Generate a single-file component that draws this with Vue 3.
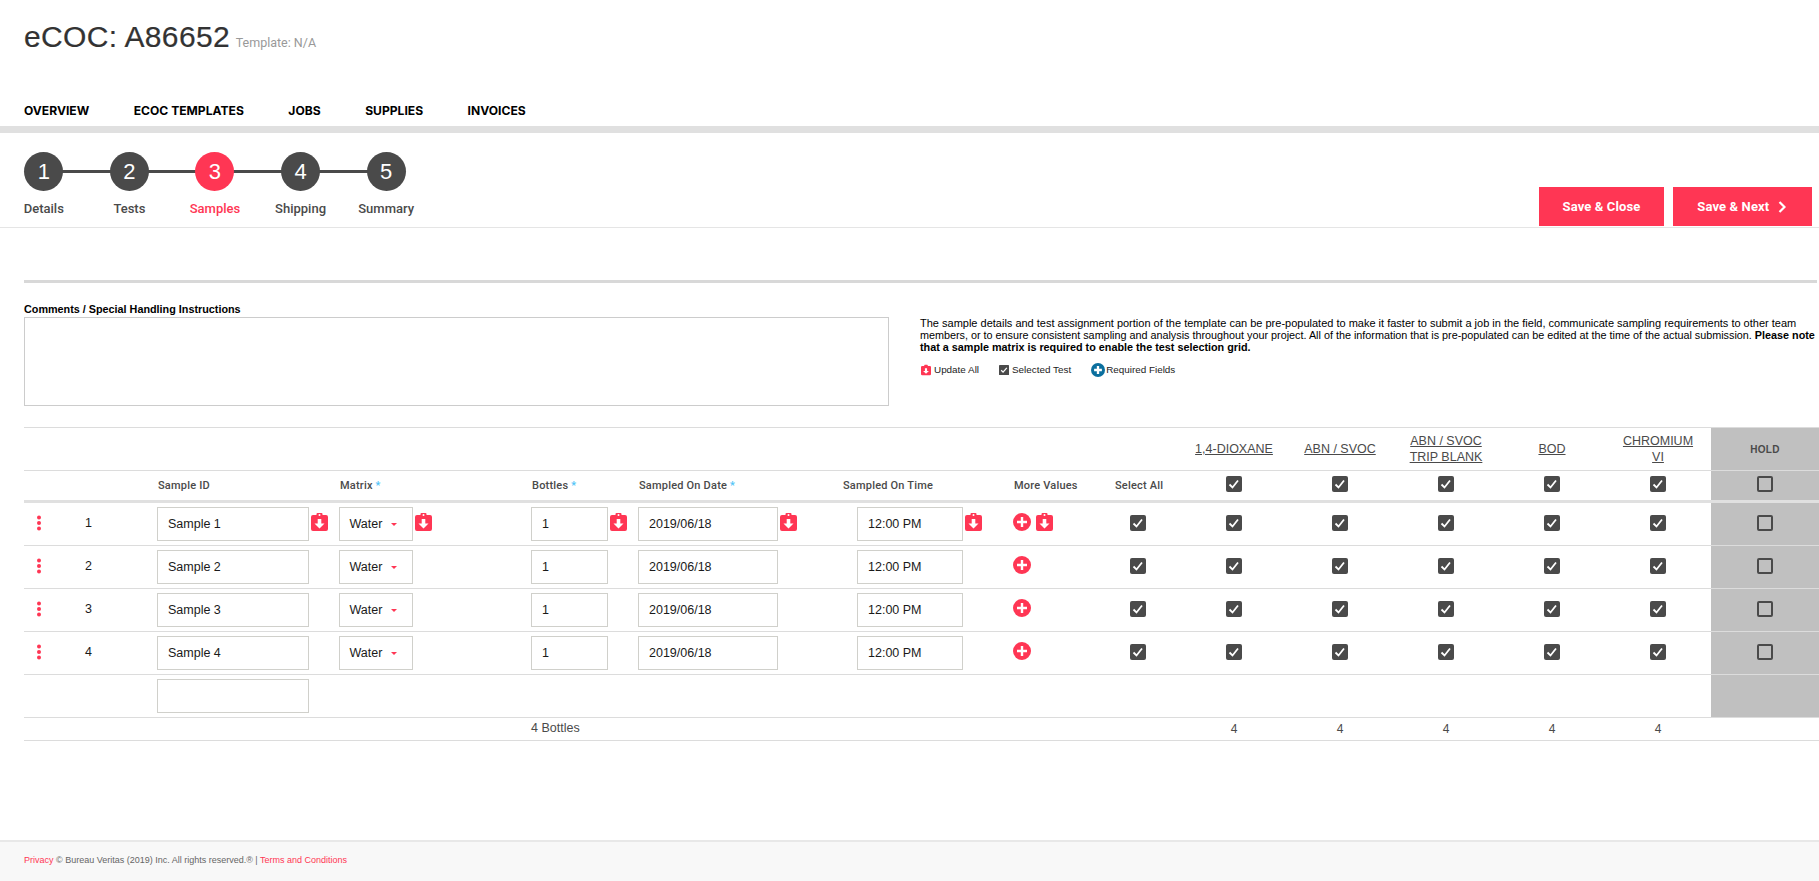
<script setup>
const nav = ['OVERVIEW', 'ECOC TEMPLATES', 'JOBS', 'SUPPLIES', 'INVOICES']
const steps = ['Details', 'Tests', 'Samples', 'Shipping', 'Summary']
const tests = [['1,4-DIOXANE'], ['ABN / SVOC'], ['ABN / SVOC', 'TRIP BLANK'], ['BOD'], ['CHROMIUM', 'VI']]
const rows = [1, 2, 3, 4]
const clipBody = 'M2 2h3.500V1a1 1 0 0 1 1-1h4a1 1 0 0 1 1 1v1H15a2 2 0 0 1 2 2v12a2 2 0 0 1-2 2H2a2 2 0 0 1-2-2V4a2 2 0 0 1 2-2z'
const clipArrow = 'M6.700 6h3.600v4.500h3.200l-5 5-5-5h3.200z'
</script>

<template>
  <div class="page">
    <header class="top">
      <h1 class="title">eCOC: A86652 <small>Template: N/A</small></h1>
      <nav class="nav"><a v-for="n in nav" :key="n">{{ n }}</a></nav>
    </header>
    <div class="graybar"></div>

    <section class="wizard">
      <ol class="steps">
        <li v-for="(s, i) in steps" :key="s" class="step" :class="{ active: i === 2 }">
          <span class="circle">{{ i + 1 }}</span>
          <span class="lbl">{{ s }}</span>
        </li>
      </ol>
      <div class="actions">
        <button class="btn close">Save &amp; Close</button>
        <button class="btn next">Save &amp; Next
          <svg width="8" height="12" viewBox="0 0 8 12"><path d="M1.500 1l5 5-5 5" fill="none" stroke="#fff" stroke-width="2.200"/></svg>
        </button>
      </div>
    </section>

    <div class="rule"></div>

    <section class="info">
      <div class="comments">
        <label>Comments / Special Handling Instructions</label>
        <textarea></textarea>
      </div>
      <div class="help">
        <p><span class="first">The sample details and test assignment portion of the template can be pre-populated to make it faster to submit a job in the field, communicate sampling requirements to other team</span><br>members, or to ensure consistent sampling and analysis throughout your project. All of the information that is pre-populated can be edited at the time of the actual submission. <b>Please note<br>that a sample matrix is required to enable the test selection grid.</b></p>
        <div class="legend">
          <span class="lg l1">
            <svg width="10" height="12" viewBox="0 0 17 18"><path :d="clipBody" fill="#ff3654"/><path :d="clipArrow" fill="#fff"/></svg>
            Update All</span>
          <span class="lg l2">
            <svg width="10" height="10" viewBox="0 0 16 16"><rect width="16" height="16" rx="1" fill="#4a4a4a"/><path d="M3.500 8.500l3 3 6-7" fill="none" stroke="#fff" stroke-width="2"/></svg>
            Selected Test</span>
          <span class="lg l3">
            <svg width="14" height="14" viewBox="0 0 18 18"><circle cx="9" cy="9" r="9" fill="#0b6f9e"/><path d="M9 4v10M4 9h10" stroke="#fff" stroke-width="3"/></svg>
            Required Fields</span>
        </div>
      </div>
    </section>

    <section class="grid">
      <div class="gr head1">
        <div class="span9"></div>
        <div v-for="(t, i) in tests" :key="i" class="tname">
          <a v-for="l in t" :key="l">{{ l }}</a>
        </div>
        <div class="hold holdtitle">HOLD</div>
      </div>
      <div class="gr head2">
        <div></div><div></div>
        <div class="th">Sample ID</div>
        <div class="th">Matrix <i>*</i></div>
        <div class="th">Bottles <i>*</i></div>
        <div class="th">Sampled On Date <i>*</i></div>
        <div class="th">Sampled On Time</div>
        <div class="th">More Values</div>
        <div class="th">Select All</div>
        <div v-for="t in 5" :key="t" class="c"><span class="chk on"><svg width="16" height="16" viewBox="0 0 16 16"><path d="M3.500 8.500l3 3 5.500-7" fill="none" stroke="#fff" stroke-width="1.800"/></svg></span></div>
        <div class="c hold"><span class="chk"></span></div>
      </div>
      <div v-for="r in rows" :key="r" class="gr row">
        <div class="dots"><svg width="6" height="16" viewBox="0 0 6 16"><circle cx="3" cy="2.500" r="2" fill="#ff3654"/><circle cx="3" cy="8" r="2" fill="#ff3654"/><circle cx="3" cy="13.500" r="2" fill="#ff3654"/></svg></div>
        <div class="num">{{ r }}</div>
        <div class="cell"><input class="inp w-id" :value="'Sample ' + r" readonly>
          <svg v-if="r === 1" class="clip" width="17" height="18" viewBox="0 0 17 18"><path :d="clipBody" fill="#ff3654"/><circle cx="8.500" cy="2" r="1" fill="#fff"/><path :d="clipArrow" fill="#fff"/></svg>
        </div>
        <div class="cell"><div class="sel">Water<span class="caret"></span></div>
          <svg v-if="r === 1" class="clip" width="17" height="18" viewBox="0 0 17 18"><path :d="clipBody" fill="#ff3654"/><circle cx="8.500" cy="2" r="1" fill="#fff"/><path :d="clipArrow" fill="#fff"/></svg>
        </div>
        <div class="cell"><input class="inp w-bot" value="1" readonly>
          <svg v-if="r === 1" class="clip" width="17" height="18" viewBox="0 0 17 18"><path :d="clipBody" fill="#ff3654"/><circle cx="8.500" cy="2" r="1" fill="#fff"/><path :d="clipArrow" fill="#fff"/></svg>
        </div>
        <div class="cell"><input class="inp w-date" value="2019/06/18" readonly>
          <svg v-if="r === 1" class="clip" width="17" height="18" viewBox="0 0 17 18"><path :d="clipBody" fill="#ff3654"/><circle cx="8.500" cy="2" r="1" fill="#fff"/><path :d="clipArrow" fill="#fff"/></svg>
        </div>
        <div class="cell timec"><input class="inp w-time" value="12:00 PM" readonly>
          <svg v-if="r === 1" class="clip" width="17" height="18" viewBox="0 0 17 18"><path :d="clipBody" fill="#ff3654"/><circle cx="8.500" cy="2" r="1" fill="#fff"/><path :d="clipArrow" fill="#fff"/></svg>
        </div>
        <div class="cell more">
          <svg width="18" height="18" viewBox="0 0 18 18"><circle cx="9" cy="9" r="9" fill="#ff3654"/><path d="M9 4v10M4 9h10" stroke="#fff" stroke-width="2.400"/></svg>
          <svg v-if="r === 1" width="17" height="18" viewBox="0 0 17 18"><path :d="clipBody" fill="#ff3654"/><circle cx="8.500" cy="2" r="1" fill="#fff"/><path :d="clipArrow" fill="#fff"/></svg>
        </div>
        <div class="cell selall"><span class="chk on"><svg width="16" height="16" viewBox="0 0 16 16"><path d="M3.500 8.500l3 3 5.500-7" fill="none" stroke="#fff" stroke-width="1.800"/></svg></span></div>
        <div v-for="t in 5" :key="t" class="c"><span class="chk on"><svg width="16" height="16" viewBox="0 0 16 16"><path d="M3.500 8.500l3 3 5.500-7" fill="none" stroke="#fff" stroke-width="1.800"/></svg></span></div>
        <div class="c hold"><span class="chk"></span></div>
      </div>
      <div class="gr row">
        <div></div><div></div>
        <div class="cell"><input class="inp w-id" readonly></div>
        <div class="span6"></div>
        <div class="c hold last"></div>
      </div>
      <div class="gr totals">
        <div></div><div></div><div></div><div></div>
        <div class="tot">4 Bottles</div>
        <div></div><div></div><div></div><div></div>
        <div v-for="t in 5" :key="t" class="c tot">4</div>
        <div></div>
      </div>
    </section>

    <footer class="foot">
      <a>Privacy</a> © Bureau Veritas (2019) Inc. All rights reserved.® | <a>Terms and Conditions</a>
    </footer>
  </div>
</template>

<style>
html, body { margin: 0; background: #fff; }
</style>

<style scoped>
.page { height: 881px; width: 1819px; overflow: hidden; font-family: "Liberation Sans", Arial, sans-serif; color: #4a4a4a; display: flex; flex-direction: column; }
.top { height: 126px; padding: 20px 0 0 24px; box-sizing: border-box; }
.title { margin: 0; height: 38px; font-size: 30px; font-weight: 400; line-height: 34px; color: #333; letter-spacing: .35px; -webkit-text-stroke: .2px #333; }
.title small { font-size: 12.500px; color: #999; font-family: Roboto, sans-serif; margin-left: -3px; letter-spacing: 0; -webkit-text-stroke: 0; }
.nav { display: flex; gap: 44.500px; margin-top: 45px; }
.nav a { font-family: Inter, sans-serif; font-weight: 700; font-size: 12.100px; line-height: 16px; color: #000; }
.graybar { height: 7px; background: #e0e0e0; }
.wizard { height: 95px; box-sizing: border-box; border-bottom: 1px solid #e5e5e5; display: flex; justify-content: space-between; align-items: flex-end; padding-bottom: 1px; }
.steps { list-style: none; margin: 0 0 0 1px; padding: 0; display: flex; align-self: flex-start; padding-top: 19px; }
.step { width: 85.600px; display: flex; flex-direction: column; align-items: center; position: relative; }
.step:not(:last-child)::after { content: ""; position: absolute; left: 50%; width: 100%; top: 18px; height: 3px; background: #4a4a4a; }
.circle { width: 39px; height: 39px; border-radius: 50%; background: #4a4a4a; color: #fff; font-size: 22px; line-height: 39px; text-align: center; position: relative; z-index: 1; }
.lbl { margin-top: 10px; font-family: Roboto, sans-serif; font-weight: 500; font-size: 13px; line-height: 16px; white-space: nowrap; color: #4a4a4a; }
.active .circle { background: #ff3654; }
.active .lbl { color: #ff3654; }
.actions { display: flex; gap: 9px; margin-right: 7px; }
.btn { height: 39px; border: 0; background: #ff3654; color: #fff; font-family: Roboto, sans-serif; font-weight: 700; font-size: 13px; letter-spacing: .12px; padding: 0; }
.close { width: 125px; }
.next { width: 139px; padding-right: 2px; }
.next svg { margin-left: 5px; vertical-align: -2px; }
.rule { height: 3px; background: #d8d8d8; margin: 52px 2px 0 24px; }
.info { height: 144px; display: flex; padding-left: 24px; }
.comments { width: 865px; padding-top: 21px; }
.comments label { display: block; font-size: 10.800px; font-weight: 700; color: #000; line-height: 13px; margin-top: -1px; padding-bottom: 1px; }
.comments textarea { display: block; width: 865px; height: 89px; box-sizing: border-box; border: 1px solid #ccc; margin: 0; resize: none; background: #fff; }
.help { margin-left: 31px; width: 899px; padding-top: 34px; font-size: 10.800px; color: #000; }
.help p { margin: 0; line-height: 12px; white-space: nowrap; }
.help .first { font-size: 11px; }
.help b { font-size: 10.800px; }
.legend { display: flex; font-size: 9.900px; color: #222; margin-top: 10px; line-height: 14px; align-items: center; }
.lg { display: inline-flex; align-items: center; gap: 3px; white-space: nowrap; }
.l1 { margin-left: 1px; }
.l2 { margin-left: 20px; }
.l3 { margin-left: 20px; gap: 1px; }
.grid { margin-left: 24px; }
.gr { display: grid; grid-template-columns: 30px 103px 182px 192px 107px 204px 171px 101px 67px repeat(5, 106px) 108px; border-bottom: 1px solid #dcdcdc; }
.head1 { height: 44px; border-top: 1px solid #dcdcdc; box-sizing: border-box; }
.span9 { grid-column: span 9; }
.span6 { grid-column: span 11; }
.tname { display: flex; flex-direction: column; align-items: center; justify-content: center; font-size: 12.500px; line-height: 16px; }
.tname a { text-decoration: underline; color: #4a4a4a; }
.hold { background: #c0c0c0; }
.holdtitle { font-size: 10px; font-weight: 700; display: flex; align-items: center; justify-content: center; letter-spacing: .3px; }
.head2 { height: 32px; box-sizing: border-box; border-bottom: 3px solid #e0e0e0; }
.th { font-family: Roboto, sans-serif; font-size: 11px; font-weight: 500; letter-spacing: .2px; line-height: 29px; color: #4a4a4a; padding-left: 1px; white-space: nowrap; }
.th i { font-style: normal; color: #4fc3f7; }
.c { display: flex; align-items: center; justify-content: center; padding-bottom: 3px; box-sizing: border-box; }
.chk { width: 16px; height: 16px; border-radius: 2px; box-sizing: border-box; border: 2px solid #4a4a4a; display: block; }
.chk.on { background: #4a4a4a; border: 0; }
.chk svg { display: block; }
.row { height: 43px; box-sizing: border-box; }
.dots { display: flex; align-items: center; justify-content: center; padding-bottom: 3px; }
.num { font-size: 12.500px; color: #1a1a1a; padding-left: 31px; line-height: 41px; }
.cell { display: flex; align-items: center; gap: 2px; }
.inp, .sel { height: 34px; box-sizing: border-box; border: 1px solid #d0d0cb; background: #fff; font-family: "Liberation Sans", Arial, sans-serif; font-size: 12.500px; color: #1a1a1a; padding: 0 0 0 10px; margin: 0; outline: 0; display: block; }
.sel { width: 74px; line-height: 32px; position: relative; padding-left: 9.500px; }
.caret { position: absolute; left: 51px; top: 15px; border: 3px solid transparent; border-top: 3px solid #ff3654; border-bottom: 0; }
.w-id { width: 152px; }
.w-bot { width: 77px; }
.w-date { width: 140px; }
.w-time { width: 106px; }
.timec { padding-left: 15px; }
.clip { margin-top: -4px; }
.more { gap: 5px; padding-left: 0; padding-bottom: 4px; }
.selall { padding-left: 16px; padding-bottom: 3px; }
.totals { height: 23px; box-sizing: border-box; }
.tot { font-size: 12.500px; line-height: 21px; color: #4a4a4a; }
.totals .c { padding-bottom: 0; font-size: 12px; }
.foot { margin-top: auto; height: 41px; flex: none; box-sizing: border-box; border-top: 2px solid #e8e8e8; background: #f8f8f8; padding: 0 0 0 24px; font-size: 9px; line-height: 37px; color: #666; }
.foot a { color: #ff3654; }
</style>
